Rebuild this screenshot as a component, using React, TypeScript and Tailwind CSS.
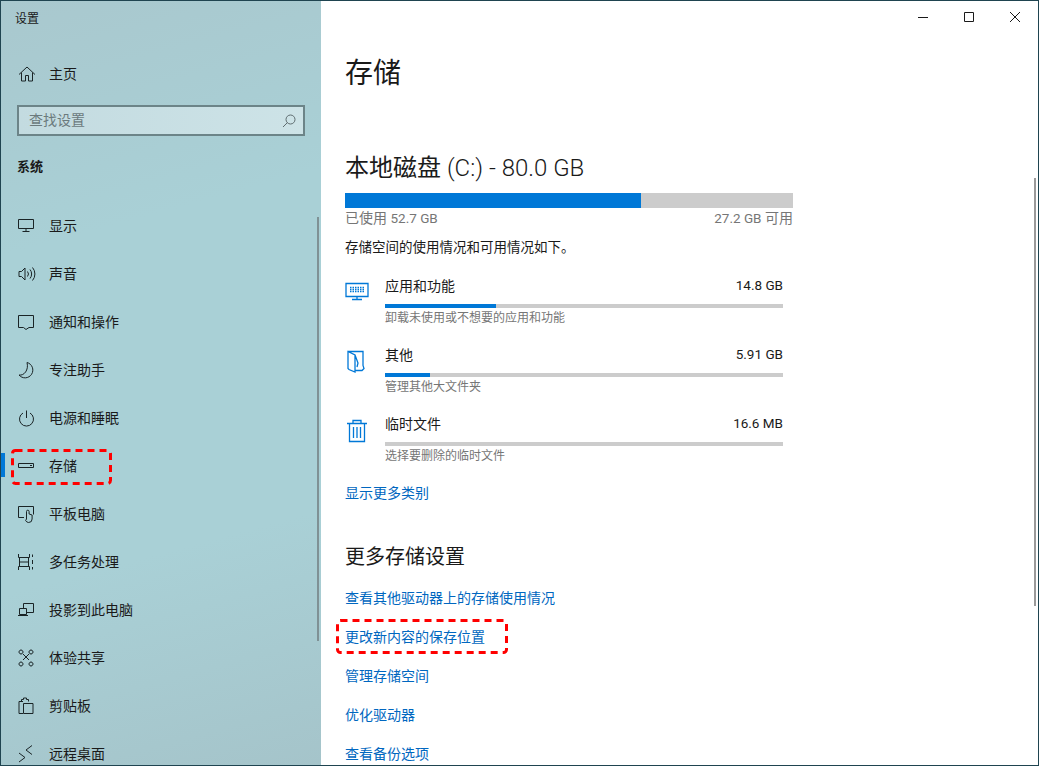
import type { ReactNode } from 'react'

const FONT = "font-['Roboto','Noto_Sans_CJK_SC',sans-serif]"

const Icon = ({ children, className = 'text-[#1a2426]' }: { children: ReactNode; className?: string }) => (
    <svg
        width="20"
        height="20"
        viewBox="0 0 20 20"
        fill="none"
        stroke="currentColor"
        strokeWidth="1"
        className={`shrink-0 ${className}`}
    >
        {children}
    </svg>
)

const NAV_ITEMS: { label: string; icon: ReactNode }[] = [
    {
        label: '显示',
        icon: <path d="M1.500 3.500h15v9h-15zM9 12.500v3M5.500 15.500h7" />,
    },
    {
        label: '声音',
        icon: <path d="M2 7.500h2.500l3.500-3.500v12l-3.500-3.500H2zM10.500 7.500a4 4 0 0 1 0 5M13 5.500a7 7 0 0 1 0 9M15.500 3.500a10 10 0 0 1 0 13" />,
    },
    {
        label: '通知和操作',
        icon: <path d="M1.500 3.500h15v12h-4.500l-3 2-2.500-2h-5z" />,
    },
    {
        label: '专注助手',
        icon: <path d="M10 2.500a7.800 7.800 0 1 1-8 12.500c5 1 10-5 8-12.500z" />,
    },
    {
        label: '电源和睡眠',
        icon: <path d="M9.500 2.500v7.500M6 5a7 7 0 1 0 7 0" />,
    },
    {
        label: '存储',
        icon: <path d="M1.500 7.500h15v4h-15zM13 9.500h2" />,
    },
    {
        label: '平板电脑',
        icon: <path d="M7 13.500H1.500v-11h15v8M9.500 15V7.500a1.300 1.300 0 0 1 2.600 0V10l3 1v4a3.500 3.500 0 0 1-3.500 3.500 3.500 3.500 0 0 1-3-2z" />,
    },
    {
        label: '多任务处理',
        icon: <path d="M1.500 2v3.500h11V2M1.500 18v-3.500h11V18M2.500 5.500v9M11.500 5.500v9M2.500 10h9M15.500 2.500v2.500M15.500 15v2.500M15.500 8v4" />,
    },
    {
        label: '投影到此电脑',
        icon: <path d="M6.500 8V3.500h10v9h-6.500M2.500 8.500h7v6h-7zM1 15.500h10" />,
    },
    {
        label: '体验共享',
        icon: <path d="M6 6l6 6M12 6l-6 6M4 2a2 2 0 1 0 .01 0zM14 2a2 2 0 1 0 .01 0zM4 14a2 2 0 1 0 .01 0zM14 14a2 2 0 1 0 .01 0z" />,
    },
    {
        label: '剪贴板',
        icon: <path d="M6 5.500H2v12h4M4.500 5.500v-2h2V2h3v1.500h2v2M6.500 7.500h9.500v10H6.500z" />,
    },
    {
        label: '远程桌面',
        icon: <path d="M2 9l6 4.500-6 4.500M15 1.500l-6 4.500 6 4.500" />,
    },
]

const NavItem = ({ label, icon, active }: { label: string; icon: ReactNode; active?: boolean }) => (
    <div className="relative flex h-12 shrink-0 items-center pl-[16px]">
        {active && <div className="absolute left-0 top-[11px] h-6 w-1 bg-[#0078d7]" />}
        <Icon>{icon}</Icon>
        <span className="ml-3 text-sm text-[#1a1a1a]">{label}</span>
    </div>
)

const Sidebar = () => (
    <aside className="relative h-full w-[320px] shrink-0 overflow-hidden bg-[linear-gradient(165deg,#a9c8ce_0%,#a9d0d6_30%,#a9d0d6_70%,#a5c4ca_100%)]">
        <div className="flex h-[36px] items-center pl-3.5 text-xs text-[#1a1a1a]">设置</div>
        <div className="mt-[13px] flex h-12 items-center pl-[16px]">
            <Icon>
                <path d="M2 10.500L10 3l8 7.500M4.500 8.500v8.500h4v-5.500h3v5.500h4V8.500" />
            </Icon>
            <span className="ml-3 text-sm text-[#1a1a1a]">主页</span>
        </div>
        <div className="mx-[16px] mt-[7px] flex h-[31px] items-center justify-between border-2 border-[#6c8488] bg-[linear-gradient(90deg,#c3dbe0,#cde3e7)] pl-[10px] pr-[7px]">
            <span className="pb-0.5 text-sm text-[#6b7a7d]">查找设置</span>
            <svg width="14" height="14" viewBox="0 0 14 14" fill="none" stroke="#5f6d70">
                <circle cx="8.500" cy="5.500" r="4.500" />
                <path d="M5.500 8.500L1 13" />
            </svg>
        </div>
        <div className="mt-[21px] pl-[16px] text-[13px] font-bold leading-[20px] text-[#1a1a1a]">系统</div>
        <div className="mt-[25px] flex flex-col">
            {NAV_ITEMS.map((item) => (
                <NavItem key={item.label} label={item.label} icon={item.icon} active={item.label === '存储'} />
            ))}
        </div>
        <div className="absolute left-[316px] top-[216px] h-[424px] w-0.5 bg-[#7f9195]" />
    </aside>
)

const CATEGORIES = [
    {
        name: '应用和功能',
        size: '14.8 GB',
        percent: 28,
        desc: '卸载未使用或不想要的应用和功能',
        icon: (
            <>
                <path d="M1 2.500h22v13H1zM12 15.500v3M7 18.500h10" />
                <path d="M5 6.500h14M5 8.500h14M5 10.500h14" strokeDasharray="1.500 1" />
            </>
        ),
    },
    {
        name: '其他',
        size: '5.91 GB',
        percent: 11.300,
        desc: '管理其他大文件夹',
        icon: <path d="M3 1.500l7 3.500v17l-6-2.500-1-1zM3 1.500h15v14l1 3-2 2H10M10 5l3 8-1 4" />,
    },
    {
        name: '临时文件',
        size: '16.6 MB',
        percent: 0,
        desc: '选择要删除的临时文件',
        icon: <path d="M2 4.500h20M8 4.500v-3h8v3M4.500 4.500v18h15v-18M8.500 8v11M12 8v11M15.500 8v11" />,
    },
]

const CategoryRow = ({ name, size, percent, desc, icon }: (typeof CATEGORIES)[number]) => (
    <div className="flex h-[69px]">
        <div className="w-10 shrink-0 pt-[7px]">
            <svg width="24" height="24" viewBox="0 0 24 24" fill="none" stroke="#0078d7" strokeWidth="1.300">
                {icon}
            </svg>
        </div>
        <div className="w-[398px]">
            <div className="flex h-[24px] items-center justify-between text-sm text-[#1a1a1a]">
                <span>{name}</span>
                <span className="text-[13.500px]">{size}</span>
            </div>
            <div className="mt-[6px] h-1 w-full bg-[#cccccc]">
                <div className="h-full bg-[#0078d7]" style={{ width: `${percent}%` }} />
            </div>
            <div className="mt-[1px] text-xs leading-[18px] text-[#767676]">{desc}</div>
        </div>
    </div>
)

const LINKS = ['查看其他驱动器上的存储使用情况', '更改新内容的保存位置', '管理存储空间', '优化驱动器', '查看备份选项']

const Main = () => (
    <main className="relative h-full flex-1 bg-white">
        <div className="flex h-[31px] justify-end text-[#1a1a1a]">
            <div className="flex h-[31px] w-[46px] items-center justify-center">
                <svg width="10" height="10" viewBox="0 0 10 10" stroke="currentColor"><path d="M0 5.500h10" /></svg>
            </div>
            <div className="flex h-[31px] w-[46px] items-center justify-center">
                <svg width="10" height="10" viewBox="0 0 10 10" fill="none" stroke="currentColor"><path d="M.5.500h9v9h-9z" /></svg>
            </div>
            <div className="flex h-[31px] w-[46px] items-center justify-center">
                <svg width="10" height="10" viewBox="0 0 10 10" stroke="currentColor"><path d="M0 0l10 10M10 0L0 10" /></svg>
            </div>
        </div>
        <div className="pl-6">
            <h1 className="mt-[21px] text-[28px] leading-[42px] text-[#1a1a1a]">存储</h1>
            <h2 className="mt-[55px] text-2xl font-normal leading-[36px] text-[#1a1a1a]">
                本地磁盘 <span className="font-light">(C:) - 80.0 GB</span>
            </h2>
            <div className="mt-[7px] h-[15px] w-[448px] bg-[#cccccc]">
                <div className="h-full w-[296px] bg-[#0078d7]" />
            </div>
            <div className="flex w-[448px] justify-between text-sm leading-[20px] text-[#767676]">
                <span>已使用 <span className="text-[13.500px]">52.7 GB</span></span>
                <span><span className="text-[13.500px]">27.2 GB</span> 可用</span>
            </div>
            <p className="mt-[9px] text-[13.500px] leading-[20px] text-[#1a1a1a]">存储空间的使用情况和可用情况如下。</p>
            <div className="mt-[17px] flex flex-col">
                {CATEGORIES.map((c) => (
                    <CategoryRow key={c.name} {...c} />
                ))}
            </div>
            <a className="mt-[2px] block text-sm leading-[20px] text-[#0067c0]">显示更多类别</a>
            <h3 className="mt-[39px] text-xl leading-[30px] text-[#1a1a1a]">更多存储设置</h3>
            <div className="mt-[16px] flex flex-col gap-[19px]">
                {LINKS.map((l) => (
                    <a key={l} className="block text-sm leading-[20px] text-[#0067c0]">{l}</a>
                ))}
            </div>
        </div>
        <div className="absolute right-[2px] top-[177px] h-[428px] w-0.5 bg-[#9a9a9a]" />
    </main>
)

// the red dashed marks drawn over the screenshot
const Mark = ({ className, width, height }: { className: string; width: number; height: number }) => (
    <svg width={width} height={height} className={`pointer-events-none absolute ${className}`} fill="none">
        <rect
            x="1.500"
            y="1.500"
            width={width - 3}
            height={height - 3}
            rx="3"
            stroke="#ff0000"
            strokeWidth="3"
            strokeDasharray="7 5"
        />
    </svg>
)

export default function App() {
    return (
        <div className={`relative flex h-[766px] w-[1039px] overflow-hidden border border-[#1f4450] ${FONT}`}>
            <Sidebar />
            <Main />
            <Mark className="left-[10px] top-[448px]" width={101} height={36} />
            <Mark className="left-[335px] top-[618px]" width={172} height={35} />
        </div>
    )
}
